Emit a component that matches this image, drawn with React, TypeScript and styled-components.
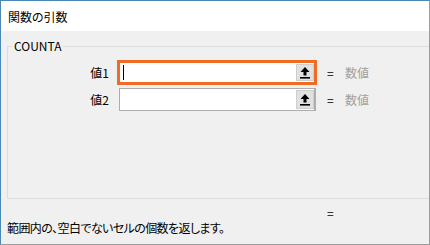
import React from 'react';
import styled, { createGlobalStyle } from 'styled-components';

const GlobalStyle = createGlobalStyle`
  html, body {
    margin: 0;
    padding: 0;
    background: #ffffff;
  }
  * {
    box-sizing: border-box;
  }
`;

const fontStack = `"Noto Sans CJK JP", "Noto Sans", sans-serif`;

const Window = styled.div`
  width: 430px;
  height: 245px;
  display: flex;
  flex-direction: column;
  border-top: 1px solid #4a89b5;
  border-left: 1px solid #4a89b5;
  border-right: 1px solid #9c9c9c;
  border-bottom: 1px solid #9c9c9c;
  font-family: ${fontStack};
  font-size: 12px;
  font-feature-settings: 'palt';
  color: #000;
  overflow: hidden;
`;

const TitleBar = styled.div`
  height: 30px;
  flex: none;
  display: flex;
  align-items: center;
  padding-left: 7px;
  background: #ffffff;
  font-size: 12px;
`;

const Body = styled.div`
  flex: 1;
  display: flex;
  flex-direction: column;
  background: #f0f0f0;
  padding-top: 7px;
`;

const Group = styled.fieldset`
  margin: 0 -12px 0 6px;
  padding: 5px 0 0 0;
  height: 161px;
  border: 1px solid #dcdcdc;
  min-width: 0;
`;

const Legend = styled.legend`
  margin-left: 4px;
  padding: 0 2px;
  line-height: 16px;
  font-size: 12px;
`;

const ArgGrid = styled.div`
  display: grid;
  grid-template-columns: 102px 207px 28px max-content;
  grid-auto-rows: 27px;
  justify-content: start;
  align-items: center;
`;

const ArgLabel = styled.div`
  text-align: right;
  padding-right: 1px;
`;

const FieldCell = styled.div`
  padding-left: 7px;
  display: flex;
  align-items: center;
`;

const InputBox = styled.div<{ $focused?: boolean }>`
  flex: none;
  display: flex;
  align-items: stretch;
  background: #ffffff;
  ${({ $focused }) =>
    $focused
      ? `
    width: 200px;
    height: 25px;
    border: 3px solid #f26b24;
  `
      : `
    width: 197px;
    height: 23px;
    margin-left: 2px;
    border: 1px solid #adadad;
    border-right-width: 2px;
  `}
`;

const TextArea = styled.div`
  flex: 1;
  display: flex;
  align-items: center;
  padding-left: 3px;
`;

const Caret = styled.span`
  width: 1px;
  height: 15px;
  background: #000;
`;

const RefButton = styled.div`
  width: 18px;
  margin: 1px 0;
  display: flex;
  align-items: center;
  justify-content: center;
  background: #e1e1e1;
  border: 1px solid #cfcfcf;
`;

const Equals = styled.div`
  padding-left: 10px;
`;

const Value = styled.div`
  color: #a0a0a0;
  font-size: 12px;
`;

const Footer = styled.div`
  display: flex;
  flex-direction: column;
  padding-top: 7px;
`;

const ResultRow = styled.div`
  height: 14px;
  line-height: 14px;
  padding-left: 326px;
`;

const Description = styled.div`
  height: 16px;
  line-height: 16px;
  padding-left: 6px;
  font-size: 12px;
  letter-spacing: -0.6px;
`;

const UploadIcon = () => (
  <svg width="10" height="12" viewBox="0 0 10 12">
    <path d="M5 0 L9.5 5 L6.5 5 L6.5 8.5 L3.5 8.5 L3.5 5 L0.5 5 Z" fill="#000" />
    <rect x="0" y="10" width="10" height="1.6" fill="#000" />
  </svg>
);

type Arg = { label: string; focused?: boolean };

const args: Arg[] = [
  { label: '値1', focused: true },
  { label: '値2' },
];

export default function App() {
  return (
    <>
      <GlobalStyle />
      <Window>
        <TitleBar>関数の引数</TitleBar>
        <Body>
          <Group>
            <Legend>COUNTA</Legend>
            <ArgGrid>
              {args.map((a) => (
                <React.Fragment key={a.label}>
                  <ArgLabel>{a.label}</ArgLabel>
                  <FieldCell>
                    <InputBox $focused={a.focused}>
                      <TextArea>{a.focused && <Caret />}</TextArea>
                      <RefButton>
                        <UploadIcon />
                      </RefButton>
                    </InputBox>
                  </FieldCell>
                  <Equals>=</Equals>
                  <Value>数値</Value>
                </React.Fragment>
              ))}
            </ArgGrid>
          </Group>
          <Footer>
            <ResultRow>=</ResultRow>
            <Description>範囲内の、空白でないセルの個数を返します。</Description>
          </Footer>
        </Body>
      </Window>
    </>
  );
}
